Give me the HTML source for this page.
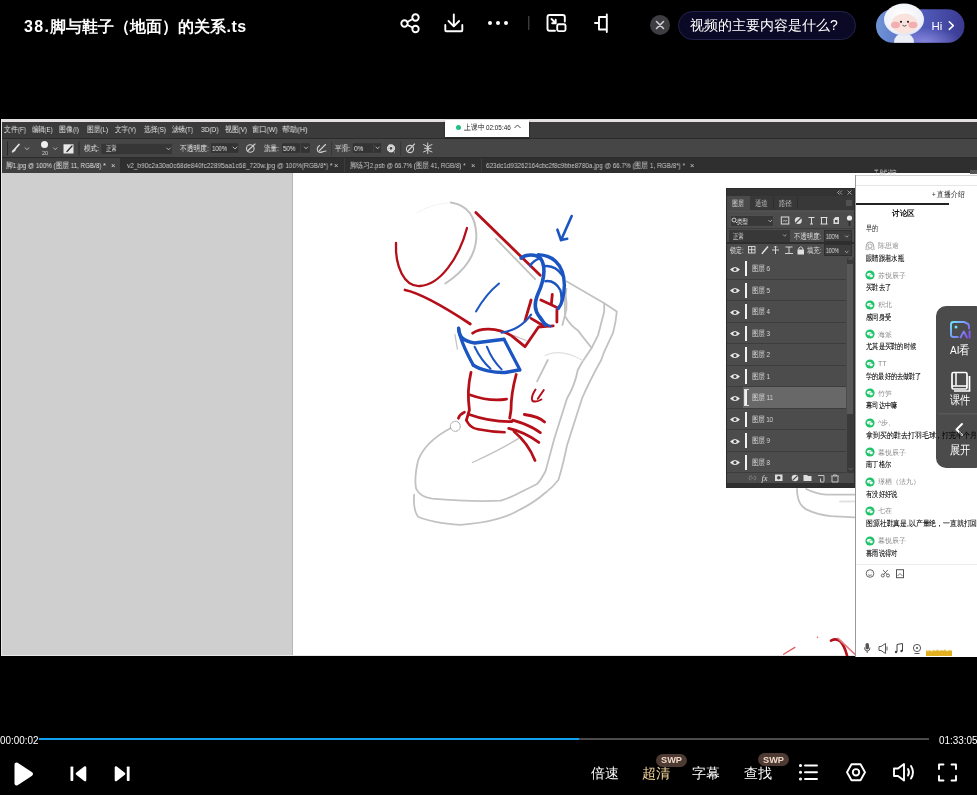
<!DOCTYPE html>
<html><head><meta charset="utf-8">
<style>
*{margin:0;padding:0;box-sizing:border-box}
html,body{width:977px;height:795px;overflow:hidden;background:#000}
body{position:relative;font-family:"Liberation Sans",sans-serif;color:#fff}
.a{position:absolute}
.t{white-space:nowrap;line-height:1}
.ps span{white-space:nowrap;line-height:1}
.a{will-change:transform}
</style></head><body>
<!-- title -->
<div class="a t" style="left:24px;top:18.5px;font-size:16px;font-weight:bold"><span style="letter-spacing:1.4px">38.</span>脚与鞋子（地面）的关系<span style="letter-spacing:0.5px">.ts</span></div>
<svg class="a" style="left:0;top:0" width="977" height="50" viewBox="0 0 977 50" fill="none" stroke="#fff" stroke-width="1.9" stroke-linecap="round" stroke-linejoin="round">
 <!-- share -->
 <circle cx="404.5" cy="23.5" r="3.2"></circle><circle cx="415.5" cy="17.5" r="3.2"></circle><circle cx="415.5" cy="29" r="3.2"></circle>
 <path d="M407.3 22 L412.7 19 M407.3 25 L412.7 27.5"></path>
 <!-- download -->
 <path d="M453.8 14.5 V26 M448.5 21 L453.8 26.3 L459.1 21 M445.3 25 V30.3 Q445.3 31.3 446.3 31.3 H461.3 Q462.3 31.3 462.3 30.3 V25"></path>
 <!-- separator -->
 <path d="M528.8 16.5 V29.5" stroke="#555" stroke-width="1"></path>
 <!-- pip -->
 <path d="M555 30.8 H549.5 Q547.5 30.8 547.5 28.8 V17 Q547.5 15 549.5 15 H562.8 Q564.8 15 564.8 17 V21.5"></path>
 <rect x="557.2" y="24.3" width="8.3" height="6.8" rx="1.5"></rect>
 <path d="M551.5 19 L555.5 23 M552.2 23.3 H555.7 V19.8"></path>
 <!-- last icon -->
 <path d="M595 23 H599 M599 17 H606.8 V29.5 H599 Z M606.8 14.5 V32"></path>
</svg>
<div class="a" style="left:488px;top:21px;width:4px;height:4px;border-radius:2px;background:#fff"></div>
<div class="a" style="left:496px;top:21px;width:4px;height:4px;border-radius:2px;background:#fff"></div>
<div class="a" style="left:504px;top:21px;width:4px;height:4px;border-radius:2px;background:#fff"></div>
<!-- close circle -->
<div class="a" style="left:650px;top:15px;width:20px;height:20px;border-radius:10px;background:#3d3d42"></div>
<svg class="a" style="left:650px;top:15px" width="20" height="20" stroke="#cfcfd4" stroke-width="1.6" stroke-linecap="round"><path d="M6.5 6.5 L13.5 13.5 M13.5 6.5 L6.5 13.5"></path></svg>
<!-- question pill -->
<div class="a" style="left:678px;top:10.5px;width:178px;height:29px;border-radius:15px;background:#0b0a26;border:1px solid #24224a"></div>
<div class="a t" style="left:690px;top:18px;font-size:14px;color:#fff">视频的主要内容是什么?</div>
<!-- avatar pill -->
<svg class="a" style="left:870px;top:0" width="107" height="50" viewBox="0 0 107 50">
 <defs>
  <linearGradient id="pg" x1="0" x2="1" y1="0" y2="0"><stop offset="0" stop-color="#6f96d6"></stop><stop offset="0.45" stop-color="#5460c0"></stop><stop offset="1" stop-color="#3b3a92"></stop></linearGradient>
  <radialGradient id="pl" cx="0.55" cy="0.95" r="0.4"><stop offset="0" stop-color="#8f8ce0" stop-opacity="0.8"></stop><stop offset="1" stop-color="#8f8ce0" stop-opacity="0"></stop></radialGradient>
  <radialGradient id="hl" cx="0.45" cy="0.35" r="0.7"><stop offset="0" stop-color="#ffffff"></stop><stop offset="0.8" stop-color="#eef0f8"></stop><stop offset="1" stop-color="#d8dcec"></stop></radialGradient>
 </defs>
 <rect x="6" y="9.3" width="88.5" height="33.4" rx="16.7" fill="url(#pg)"></rect>
 <rect x="6" y="9.3" width="88.5" height="33.4" rx="16.7" fill="url(#pl)"></rect>
 <path d="M24 42.7 Q24 34 34 33 Q44 34 44 42.7 Z" fill="#eceef6"></path>
 <ellipse cx="34" cy="19.5" rx="20" ry="16" fill="url(#hl)"></ellipse>
 <ellipse cx="34.5" cy="23.5" rx="13" ry="10" fill="#f9e3dc"></ellipse>
 <ellipse cx="25.5" cy="25" rx="4.5" ry="3.2" fill="#f4a0a4" opacity="0.8"></ellipse>
 <ellipse cx="43" cy="25" rx="4.5" ry="3.2" fill="#f4a0a4" opacity="0.8"></ellipse>
 <circle cx="31" cy="21.8" r="1.1" fill="#222"></circle><circle cx="38" cy="21.8" r="1.1" fill="#222"></circle>
 <path d="M32.5 25.3 Q34.5 27 36.5 25.3" stroke="#333" stroke-width="0.8" fill="none"></path>
 <text x="61.5" y="29.6" font-family="Liberation Sans" font-size="11.5" fill="#fff">Hi</text>
 <path d="M79.3 21.8 L83.3 25.6 L79.3 29.4" stroke="#fff" stroke-width="1.5" fill="none" stroke-linecap="round" stroke-linejoin="round"></path>
</svg>


<!-- video frame -->
<div class="a" style="left:1px;top:119px;width:976px;height:537px;background:#cfcfcf"></div>
<div class="a" style="left:1px;top:119px;width:976px;height:2.5px;background:#e4dfdf"></div>
<div class="a" style="left:1px;top:121.5px;width:976px;height:16px;background:#3b3b3b"></div>
<div class="a" style="left:1px;top:137.5px;width:976px;height:1.5px;background:#2b2b2b"></div>
<div class="a" style="left:1px;top:139px;width:976px;height:18px;background:#464646"></div>
<div class="a" style="left:1px;top:157px;width:976px;height:1px;background:#2b2b2b"></div>
<div class="a" style="left:1px;top:158px;width:976px;height:15px;background:#2f2f2f"></div>
<div class="a" style="left:1px;top:158px;width:119px;height:15px;background:#404040"></div>
<div class="a" style="left:293px;top:173px;width:684px;height:483px;background:#fff"></div>
<div class="a" style="left:292px;top:173px;width:1px;height:483px;background:#b5b5b5"></div>
<div class="a" style="left:1px;top:119px;width:1px;height:537px;background:#e8e8e8"></div>
<div class="a" style="left:1px;top:655px;width:976px;height:1px;background:#e8e8e8"></div>

<!-- drawing -->
<svg class="a" style="left:293px;top:173px" width="562" height="483" viewBox="293 173 562 483" fill="none" stroke-linecap="round" stroke-linejoin="round">
 <g stroke="#c2c2c2" stroke-width="1.8">
  <path d="M417 213 Q430 204 450.9 202.6" stroke="#f2f2f2" stroke-width="1"></path>
  <path d="M450.9 202.6 C466 205 476 215 476.4 236.5 C476 255 466 270 445.3 283.5" stroke-width="2"></path>
  <path d="M496 238.8 L535.2 279.2"></path>
  <path d="M566.4 281.3 L604.2 303.3 L616.8 311.5 Q616 322 613 332.9 L604.2 351.8 L601.2 360 Q590 380 582 398.5 L567 445.5 Q563 465 558.5 479.7 Q552 488 545.6 492.5 Q535 502 520 509.6 Q500 522 460.4 524.9 Q432 523 418.1 516.8 Q413 510 414.1 494.7"></path>
  <path d="M604.2 303.3 L604.2 311.5 L598 335.4 L591.6 348 L581.6 363 L577.8 370 Q575 385 567 398.5 L554.2 439 L545.6 471 Q541 480 537.1 484 L520 492.5 Q512 497 500.6 500.7 Q470 502 432 498.7 Q420 497 416.1 488.7 Q414 478 418.1 460.5 Q425 442 450.3 428.3"></path>
  <path d="M566.5 288.9 Q564 300 565.2 316.5 Q570 325 577.8 330.4 L591.6 348"></path>
  <path d="M545 355.5 Q561.4 348 582.8 360.6" stroke="#e0e0e0" stroke-width="1.2"></path>
  <path d="M565.4 293.3 Q567 302 566.4 309.4 L562.4 325"></path>
  <path d="M547.8 360 L537.1 381.4"></path>
  
  
  
  <path d="M472.4 462.5 Q500 450 518.7 438.4" stroke-width="1.3"></path>
  <path d="M513.9 335.6 L526.2 340.5" stroke-width="1.3"></path>
  <path d="M454.9 334.4 L457.4 349.1" stroke-width="1.2"></path>
  <path d="M797 489 C797 498 800 506 806.2 509.4 Q818 515 831 516.2 L854.8 517.3"></path>
  <path d="M806.2 489 Q816 494 826.6 494.7 L854.8 494.7"></path>
  <path d="M840 501.5 L854.8 501.5" stroke="#e2e2e2"></path>
  <circle cx="455.3" cy="426.3" r="5" stroke="#9a9a9a" stroke-width="0.9" stroke-dasharray="1.5 1"></circle>
 </g>
 <g stroke="#b50f19" stroke-width="2.8">
  <path d="M396 243 C395 266 404 287 420 286 C440 285 459 258 467 228" stroke-width="2.3"></path>
  <path d="M475.8 212.4 L540.2 275.2"></path>
  <path d="M405 290 C420 293 446 308 470.3 324"></path>
  <path d="M472.7 333.2 C480 328 496 327 511.4 335.6 L525 346.7 L538.5 327 L553.2 325.8"></path>
  <path d="M556.9 309.8 L556.9 322"></path>
  <path d="M531.1 300 L525 320.9"></path>
  <path d="M540.9 300 L556.9 307.4"></path>
  <path d="M552.3 294.3 L551.3 304.4"></path>
  <path d="M531 318.4 L543.4 325.8"></path>
  <path d="M471 372.3 C468 385 468 400 469.4 410 L466.4 420.2"></path>
  <path d="M516.2 374.5 C512 390 511 400 511 410 L509.7 418.2"></path>
  <path d="M470.4 395 Q490 402 506.6 399.1"></path>
  <path d="M468.4 414.2 Q490 422 512 421.5"></path>
  <path d="M466.4 420.2 Q470 428 478 429.3 Q492 432 504.6 432.3" stroke-width="2.6"></path>
  <path d="M458.4 418.2 Q460 414 464.4 412.2"></path>
  <path d="M535.5 389.5 Q530.5 397 532.5 401 Q536.5 402.5 541.4 399.5 M543.8 390 L537.8 398.8" stroke-width="2"></path>
  <path d="M524.3 414.5 Q539.2 416.6 544.6 422"></path>
  <path d="M512.7 420.2 Q530 425 540.3 432.6"></path>
  <path d="M508.7 428.3 Q525 432 538.8 442.4"></path>
  <path d="M514 431.5 Q528 443 535 460.4"></path>
  <path d="M783.6 654.2 L794.9 647.4" stroke="#e05a60" stroke-width="1.3"></path>
  <circle cx="817.5" cy="637.2" r="0.8" fill="#e05a60" stroke="none"></circle>
  <path d="M831 640.6 C838 637 843 641 847 655.3" stroke-width="2.6"></path>
  <path d="M838 638.4 L854.8 654.2" stroke="#e07a80" stroke-width="1.6"></path>
 </g>
 <g stroke="#1b55c2" stroke-width="3">
  <path d="M571.7 216 L561 240.3 M557.4 229.7 L561 240 L567.2 238.8" stroke-width="2.6"></path>
  <path d="M538.2 254.6 C550 255 564 262 564.4 285.2 C564 296 562 304 558.4 308.4" stroke-width="3.4"></path>
  <path d="M521.1 258.1 C526 254 536 254 540.2 258.1 C545 264 546 276 538.2 293.3 C533 305 535 312 540.2 317.4 L545.3 325" stroke-width="3.6"></path>
  <path d="M530.2 266.1 Q533 260 541.2 258.1" stroke-width="2.4"></path>
  <path d="M544.3 266.1 Q555 265 562.4 275.2" stroke-width="2.4"></path>
  <path d="M545.3 281.2 Q555 280 560.4 290.3 Q562 296 561.4 301.3" stroke-width="2.4"></path>
  <path d="M536 300 C534 312 540 322 550.7 326.4" stroke-width="2.4"></path>
  <path d="M499 283.5 Q486 294 476 311.5" stroke-width="2"></path>
  <path d="M531.1 314.7 C525 323 515 331 501.6 332.6" stroke-width="2.2"></path>
  <path d="M458.6 328.3 C459 336 462 341 474.6 343 L504 339.3" stroke-width="3.4"></path>
  <path d="M458.6 328.3 C460 340 466 352 473.3 365.1" stroke-width="3.2"></path>
  <path d="M473.3 365.1 C480 370 495 373 505.3 372.5 L518.8 370" stroke-width="3.4"></path>
  <path d="M504 339.3 L520 370" stroke-width="3.2"></path>
  <path d="M474.6 346.7 Q481 360 490.5 368.8" stroke-width="2"></path>
  <path d="M486.9 346.7 Q492 360 501.6 369.4" stroke-width="2"></path>
 </g>
</svg>

<!-- PS menu -->
<div class="a t ps" style="top:126px;font-size:7.5px;color:#e6e6e6">
<span class="a" style="left: 3.5px; display: inline-block; transform: scaleX(0.8601); transform-origin: left center;">文件(F)</span><span class="a" style="left: 32px; display: inline-block; transform: scaleX(0.7885); transform-origin: left center;">编辑(E)</span><span class="a" style="left: 59px; display: inline-block; transform: scaleX(0.866); transform-origin: left center;">图像(I)</span><span class="a" style="left: 87px; display: inline-block; transform: scaleX(0.8343); transform-origin: left center;">图层(L)</span><span class="a" style="left: 115px; display: inline-block; transform: scaleX(0.8077); transform-origin: left center;">文字(Y)</span><span class="a" style="left: 143.5px; display: inline-block; transform: scaleX(0.8462); transform-origin: left center;">选择(S)</span><span class="a" style="left: 172px; display: inline-block; transform: scaleX(0.821); transform-origin: left center;">滤镜(T)</span><span class="a" style="left: 201px; display: inline-block; transform: scaleX(0.875); transform-origin: left center;">3D(D)</span><span class="a" style="left: 224.5px; display: inline-block; transform: scaleX(0.8462); transform-origin: left center;">视图(V)</span><span class="a" style="left: 251.5px; display: inline-block; transform: scaleX(0.9082); transform-origin: left center;">窗口(W)</span><span class="a" style="left: 282px; display: inline-block; transform: scaleX(0.9651); transform-origin: left center;">帮助(H)</span>
</div>
<!-- options bar -->
<svg class="a" style="left:0;top:139px" width="440" height="18" viewBox="0 0 440 18" fill="none" stroke="#cfcfcf" stroke-linecap="round">
 <path d="M7.5 3 V16" stroke="#2a2a2a" stroke-width="1"></path>
 <path d="M19 5.5 L14.5 10.5" stroke="#e6e6e6" stroke-width="1.7"></path>
 <path d="M14.8 10.3 Q12.2 10.8 12 13.2 Q14 13.3 15.3 11.3 Z" fill="#e6e6e6" stroke="#e6e6e6" stroke-width="0.8"></path>
 <path d="M25 8.8 L27 10.6 L29 8.8" stroke-width="0.8"></path>
 <path d="M53.5 8.8 L55.3 10.6 L57 8.8" stroke-width="0.8"></path>
 <rect x="63.5" y="5.3" width="10" height="9.2" fill="#e8e8e8" stroke="none"></rect>
 <path d="M72 7 L67 12.5" stroke="#333" stroke-width="1.4"></path>
 <path d="M79 3 V16" stroke="#2a2a2a" stroke-width="1"></path>
 <rect x="101" y="4.4" width="71.2" height="11" fill="#363636" stroke="#4a4a4a" stroke-width="0.6"></rect>
 <path d="M166.7 9 L168.5 10.8 L170.3 9" stroke-width="0.8"></path>
 <rect x="210.7" y="3.9" width="28.2" height="10.3" fill="#333" stroke="#4d4d4d" stroke-width="0.6"></rect>
 <path d="M233 8 L235 10 L237 8" stroke-width="0.8"></path>
 <circle cx="250.3" cy="9.5" r="3.8" stroke-width="1.1"></circle><path d="M247.5 12 L255 5" stroke-width="1.1"></path>
 <rect x="281.5" y="3.9" width="28.7" height="10.3" fill="#333" stroke="#4d4d4d" stroke-width="0.6"></rect>
 <path d="M300.5 3.9 V14.2" stroke="#4d4d4d" stroke-width="0.6"></path>
 <path d="M304.4 8 L306 9.8 L307.7 8" stroke-width="0.8"></path>
 <path d="M319.5 6.5 Q316 9 318 12.5 Q320 14 323 13 M319.5 11.5 L325.5 5.5 M321 13 L326 12" stroke-width="1.1"></path>
 <path d="M331.5 3 V16" stroke="#383838" stroke-width="1"></path>
 <rect x="352.2" y="3.9" width="29.2" height="10.3" fill="#333" stroke="#4d4d4d" stroke-width="0.6"></rect>
 <path d="M373.7 3.9 V14.2" stroke="#4d4d4d" stroke-width="0.6"></path>
 <path d="M376 8 L377.6 9.8 L379.3 8" stroke-width="0.8"></path>
 <circle cx="391" cy="9.3" r="3.3" stroke="#e0e0e0" stroke-width="1.6" stroke-dasharray="1.3 1.3"></circle><circle cx="391" cy="9.3" r="2" stroke="#e0e0e0" stroke-width="1.3"></circle><circle cx="394.5" cy="13" r="0.5" fill="#ddd" stroke="none"></circle>
 <path d="M400.6 3 V16" stroke="#383838" stroke-width="1"></path>
 <circle cx="410" cy="10" r="3.6" stroke-width="1.1"></circle><path d="M407.5 12.5 L414.5 5" stroke-width="1.1"></path>
 <path d="M423.5 5.5 Q427.7 6.5 427.7 9.3 Q427.7 12 423.5 13 M432 5.5 Q427.7 6.5 427.7 9.3 Q427.7 12 432 13 M427.7 4 V14.5 M424.5 9.3 H431" stroke-width="1"></path>
</svg>
<div class="a" style="left:40.5px;top:140.6px;width:7.4px;height:7.4px;border-radius:4px;background:#f0f0f0"></div>
<div class="a t ps" style="left:41.5px;top:151px;font-size:5.5px;color:#ccc">20</div>
<div class="a t ps" style="top:144.5px;font-size:7.5px;color:#e6e6e6">
<span class="a" style="left: 83.8px; display: inline-block; transform: scaleX(0.8124); transform-origin: left center;">模式:</span><span class="a" style="left: 106px; display: inline-block; transform: scaleX(0.6875); transform-origin: left center;">正常</span><span class="a" style="left: 179.8px; display: inline-block; transform: scaleX(0.8418); transform-origin: left center;">不透明度:</span><span class="a" style="left: 212.3px; font-size: 7px; top: 0.3px; display: inline-block; transform: scaleX(0.8377); transform-origin: left center;">100%</span><span class="a" style="left: 264.3px; display: inline-block; transform: scaleX(0.8124); transform-origin: left center;">流量:</span><span class="a" style="left: 283px; font-size: 7px; top: 0.3px; display: inline-block; transform: scaleX(0.8847); transform-origin: left center;">50%</span><span class="a" style="left: 335px; display: inline-block; transform: scaleX(0.829); transform-origin: left center;">平滑:</span><span class="a" style="left: 353.8px; font-size: 7px; top: 0.3px; display: inline-block; transform: scaleX(0.9086); transform-origin: left center;">0%</span>
</div>
<!-- tabs -->
<div class="a t ps" style="top:161.5px;font-size:7.5px;color:#c8c8c8">
<span class="a" style="left: 6px; color: rgb(224, 224, 224); display: inline-block; transform: scaleX(0.8301); transform-origin: left center;">脚1.jpg @ 100% (图层 11, RGB/8) *</span><span class="a" style="left:110.5px;color:#ddd">×</span>
<span class="a" style="left: 126.5px; display: inline-block; transform: scaleX(0.8642); transform-origin: left center;">v2_b90c2a30a0c68de840fc22895aa1c68_720w.jpg @ 100%(RGB/8*) *</span><span class="a" style="left:334.4px">×</span>
<span class="a" style="left: 350.4px; display: inline-block; transform: scaleX(0.8223); transform-origin: left center;">脚练习2.psb @ 66.7% (图层 41, RGB/8) *</span><span class="a" style="left:471px">×</span>
<span class="a" style="left: 485.8px; display: inline-block; transform: scaleX(0.8482); transform-origin: left center;">623dc1d93262164cbc2f8c9bbe8780a.jpg @ 66.7% (图层 1, RGB/8*) *</span><span class="a" style="left:689.7px">×</span>
</div>
<div class="a" style="left:344px;top:158px;width:1px;height:14px;background:#3c3c3c"></div>
<div class="a" style="left:481px;top:158px;width:1px;height:14px;background:#3c3c3c"></div>

<!-- popup -->
<div class="a" style="left:445px;top:119.5px;width:84px;height:16.5px;background:#fff;box-shadow:0 1px 2px rgba(0,0,0,0.4)"></div>
<div class="a" style="left:456px;top:124.5px;width:4.5px;height:4.5px;border-radius:3px;background:#1fc283"></div>
<div class="a t" style="left:463.8px;top:124px;font-size:7.5px;color:#222"><span style="display: inline-block; transform: scaleX(0.8448); transform-origin: left center;">上课中 02:05:46</span></div>
<svg class="a" style="left:513px;top:122px" width="9" height="9" fill="none" stroke="#333" stroke-width="0.9"><path d="M1.5 6 L4.5 3 L7.5 6"></path></svg>

<!-- layers panel -->
<div class="a" style="left:726px;top:188px;width:129px;height:300px;background:#4c4c4c;border:1px solid #2c2c2c"></div>
<div class="a" style="left:727px;top:189px;width:127px;height:7px;background:#333"></div>
<div class="a" style="left:727px;top:196px;width:127px;height:14px;background:#383838"></div>
<div class="a" style="left:727px;top:196px;width:23px;height:14px;background:#4a4a4a"></div>
<div class="a" style="left:773px;top:197px;width:1px;height:12px;background:#2e2e2e"></div>
<div class="a" style="left:796.5px;top:197px;width:1px;height:12px;background:#2e2e2e"></div>
<div class="a t ps" style="top:199.5px;font-size:7.5px;color:#d8d8d8">
<span class="a" style="left: 731.5px; display: inline-block; transform: scaleX(0.75); transform-origin: left center;">图层</span><span class="a" style="left: 755px; color: rgb(187, 187, 187); display: inline-block; transform: scaleX(0.7813); transform-origin: left center;">通道</span><span class="a" style="left: 779px; color: rgb(187, 187, 187); display: inline-block; transform: scaleX(0.7813); transform-origin: left center;">路径</span>
</div>
<svg class="a" style="left:836px;top:188px" width="20" height="25" fill="none" stroke="#bbb" stroke-width="0.8">
 <path d="M3.5 2.5 L1.5 4.5 L3.5 6.5 M6 2.5 L4 4.5 L6 6.5"></path>
 <path d="M11.5 2.5 L15.5 6.5 M15.5 2.5 L11.5 6.5"></path>
 <path d="M10 13 H16 M10 15 H16 M10 17 H16" stroke="#777"></path>
</svg>
<div class="a" style="left:727px;top:211px;width:127px;height:1px;background:#525252"></div>
<div class="a" style="left:729.5px;top:215px;width:43.5px;height:12px;background:#383838;border:1px solid #4f4f4f"></div>
<svg class="a" style="left:729px;top:214px" width="126" height="14" fill="none" stroke="#dcdcdc" stroke-width="0.9">
 <circle cx="5" cy="6" r="2"></circle><path d="M6.5 7.5 L8.2 9.2"></path>
 <path d="M39.5 6 L41.2 7.8 L43 6" stroke-width="0.7"></path>
 <rect x="52.3" y="3" width="7.5" height="7" stroke-width="1"></rect><path d="M54.1 7.5 L55.3 6 L56.8 7.5 L58.1 6" stroke-width="0.7"></path>
 <circle cx="69.3" cy="6.5" r="3.5" fill="#dcdcdc" stroke="none"></circle><path d="M66.8 9 L71.8 4" stroke="#464646" stroke-width="1.2"></path>
 <path d="M79.5 3.5 H85.5 M82.5 3.5 V10 M81 10 H84" stroke-width="1"></path>
 <path d="M92.5 3.5 V10 M97.5 3.5 V10 M91.5 3.5 H98.5 M91.5 10 H98.5" stroke-width="1"></path>
 <path d="M104.5 5 L106.5 3 H110 V10 H104.5 Z" fill="#dcdcdc" stroke="none"></path><rect x="106" y="6" width="2.5" height="2.5" fill="#464646" stroke="none"></rect>
 <circle cx="120.5" cy="4" r="2.6" fill="#eee" stroke="none"></circle><path d="M120.5 7 V12" stroke="#2a2a2a" stroke-width="1.6"></path>
</svg>
<div class="a t ps" style="top:218px;font-size:7px;color:#e0e0e0"><span class="a" style="left: 736.5px; display: inline-block; transform: scaleX(0.7857); transform-origin: left center;">类型</span></div>
<div class="a" style="left:727px;top:228px;width:127px;height:1px;background:#3e3e3e"></div>
<div class="a" style="left:729px;top:230px;width:61px;height:11.5px;background:#383838"></div>
<div class="a" style="left:823.5px;top:229.5px;width:28px;height:12px;border:1px solid #2f2f2f;background:#3c3c3c;"></div>
<div class="a" style="left:823.5px;top:244px;width:28px;height:12px;border:1px solid #2f2f2f;background:#3c3c3c"></div>
<div class="a t ps" style="top:232.5px;font-size:7.5px;color:#e0e0e0"><span class="a" style="left: 732.5px; display: inline-block; transform: scaleX(0.6875); transform-origin: left center;">正常</span><span class="a" style="left: 793.8px; display: inline-block; transform: scaleX(0.7978); transform-origin: left center;">不透明度:</span><span class="a" style="left: 826px; font-size: 6.5px; top: 0.5px; display: inline-block; transform: scaleX(0.782); transform-origin: left center;">100%</span></div>
<svg class="a" style="left:727px;top:228px" width="127" height="30" fill="none" stroke="#ccc" stroke-width="0.7">
 <path d="M56 6.5 L57.7 8.2 L59.4 6.5"></path><path d="M118 7.5 L119.7 9.2 L121.4 7.5"></path><path d="M118 23 L119.7 24.7 L121.4 23"></path>
</svg>
<div class="a" style="left:727px;top:242px;width:127px;height:1.5px;background:#2e2e2e"></div>
<div class="a t ps" style="top:247px;font-size:7.5px;color:#e0e0e0"><span class="a" style="left: 730px; display: inline-block; transform: scaleX(0.7461); transform-origin: left center;">锁定:</span><span class="a" style="left: 806.7px; display: inline-block; transform: scaleX(0.7903); transform-origin: left center;">填充:</span><span class="a" style="left: 826px; font-size: 6.5px; top: 0.5px; display: inline-block; transform: scaleX(0.782); transform-origin: left center;">100%</span></div>
<svg class="a" style="left:727px;top:243px" width="127" height="15" fill="none" stroke="#e0e0e0" stroke-width="1">
 <rect x="21.5" y="3.5" width="6.5" height="6.5" stroke-width="0.9"></rect><path d="M21.5 6.7 H28 M24.7 3.5 V10" stroke-width="0.9"></path>
 <path d="M41 3.5 L35.5 10 M35.5 10 L35 11" stroke-width="1.5"></path>
 <path d="M48.5 3 V11 M45 7 H52 M47 4.5 L48.5 3 L50 4.5" stroke-width="0.9"></path>
 <path d="M58.5 4 H65.5 M62 4 V10 M58 10.5 H66" stroke-width="0.9"></path>
 <rect x="70.5" y="6.5" width="6.5" height="5" fill="#e0e0e0" stroke="none"></rect><path d="M71.8 6.5 V5 Q73.75 2.5 75.7 5 V6.5" stroke-width="0.9"></path>
</svg>
<div class="a" style="left:727px;top:278.5px;width:119px;height:1px;background:#3d3d3d"></div>
<svg class="a" style="left:729px;top:264.5px" width="12" height="9" viewBox="0 0 12 9"><path d="M1 4.5 Q6 -0.5 11 4.5 Q6 9.5 1 4.5 Z" fill="#e8e8e8"></path><circle cx="6" cy="4.5" r="1.6" fill="#444"></circle></svg>
<div class="a" style="left:745px;top:261.0px;width:2px;height:15px;background:#f2f2f2"></div>
<div class="a t ps" style="top:265.0px;font-size:7.5px;color:#dedede"><span class="a" style="left: 752px; display: inline-block; transform: scaleX(0.8084); transform-origin: left center;">图层 6</span></div>
<div class="a" style="left:727px;top:300.0px;width:119px;height:1px;background:#3d3d3d"></div>
<svg class="a" style="left:729px;top:286.0px" width="12" height="9" viewBox="0 0 12 9"><path d="M1 4.5 Q6 -0.5 11 4.5 Q6 9.5 1 4.5 Z" fill="#e8e8e8"></path><circle cx="6" cy="4.5" r="1.6" fill="#444"></circle></svg>
<div class="a" style="left:745px;top:282.5px;width:2px;height:15px;background:#f2f2f2"></div>
<div class="a t ps" style="top:286.5px;font-size:7.5px;color:#dedede"><span class="a" style="left: 752px; display: inline-block; transform: scaleX(0.8084); transform-origin: left center;">图层 5</span></div>
<div class="a" style="left:727px;top:321.5px;width:119px;height:1px;background:#3d3d3d"></div>
<svg class="a" style="left:729px;top:307.5px" width="12" height="9" viewBox="0 0 12 9"><path d="M1 4.5 Q6 -0.5 11 4.5 Q6 9.5 1 4.5 Z" fill="#e8e8e8"></path><circle cx="6" cy="4.5" r="1.6" fill="#444"></circle></svg>
<div class="a" style="left:745px;top:304.0px;width:2px;height:15px;background:#f2f2f2"></div>
<div class="a t ps" style="top:308.0px;font-size:7.5px;color:#dedede"><span class="a" style="left: 752px; display: inline-block; transform: scaleX(0.8084); transform-origin: left center;">图层 4</span></div>
<div class="a" style="left:727px;top:343.0px;width:119px;height:1px;background:#3d3d3d"></div>
<svg class="a" style="left:729px;top:329.0px" width="12" height="9" viewBox="0 0 12 9"><path d="M1 4.5 Q6 -0.5 11 4.5 Q6 9.5 1 4.5 Z" fill="#e8e8e8"></path><circle cx="6" cy="4.5" r="1.6" fill="#444"></circle></svg>
<div class="a" style="left:745px;top:325.5px;width:2px;height:15px;background:#f2f2f2"></div>
<div class="a t ps" style="top:329.5px;font-size:7.5px;color:#dedede"><span class="a" style="left: 752px; display: inline-block; transform: scaleX(0.8084); transform-origin: left center;">图层 3</span></div>
<div class="a" style="left:727px;top:364.5px;width:119px;height:1px;background:#3d3d3d"></div>
<svg class="a" style="left:729px;top:350.5px" width="12" height="9" viewBox="0 0 12 9"><path d="M1 4.5 Q6 -0.5 11 4.5 Q6 9.5 1 4.5 Z" fill="#e8e8e8"></path><circle cx="6" cy="4.5" r="1.6" fill="#444"></circle></svg>
<div class="a" style="left:745px;top:347.0px;width:2px;height:15px;background:#f2f2f2"></div>
<div class="a t ps" style="top:351.0px;font-size:7.5px;color:#dedede"><span class="a" style="left: 752px; display: inline-block; transform: scaleX(0.8084); transform-origin: left center;">图层 2</span></div>
<div class="a" style="left:727px;top:386.0px;width:119px;height:1px;background:#3d3d3d"></div>
<svg class="a" style="left:729px;top:372.0px" width="12" height="9" viewBox="0 0 12 9"><path d="M1 4.5 Q6 -0.5 11 4.5 Q6 9.5 1 4.5 Z" fill="#e8e8e8"></path><circle cx="6" cy="4.5" r="1.6" fill="#444"></circle></svg>
<div class="a" style="left:745px;top:368.5px;width:2px;height:15px;background:#f2f2f2"></div>
<div class="a t ps" style="top:372.5px;font-size:7.5px;color:#dedede"><span class="a" style="left: 752px; display: inline-block; transform: scaleX(0.8084); transform-origin: left center;">图层 1</span></div>
<div class="a" style="left:743px;top:387.0px;width:103px;height:21.5px;background:#686868"></div>
<div class="a" style="left:727px;top:407.5px;width:119px;height:1px;background:#3d3d3d"></div>
<svg class="a" style="left:729px;top:393.5px" width="12" height="9" viewBox="0 0 12 9"><path d="M1 4.5 Q6 -0.5 11 4.5 Q6 9.5 1 4.5 Z" fill="#e8e8e8"></path><circle cx="6" cy="4.5" r="1.6" fill="#444"></circle></svg>
<div class="a" style="left:745px;top:390.0px;width:2px;height:15px;background:#f2f2f2"></div>
<div class="a" style="left:743.5px;top:389.0px;width:5px;height:17px;border:1px solid #ddd;border-right:none"></div>
<div class="a t ps" style="top:394.0px;font-size:7.5px;color:#dedede"><span class="a" style="left: 752px; display: inline-block; transform: scaleX(0.8116); transform-origin: left center;">图层 11</span></div>
<div class="a" style="left:727px;top:429.0px;width:119px;height:1px;background:#3d3d3d"></div>
<svg class="a" style="left:729px;top:415.0px" width="12" height="9" viewBox="0 0 12 9"><path d="M1 4.5 Q6 -0.5 11 4.5 Q6 9.5 1 4.5 Z" fill="#e8e8e8"></path><circle cx="6" cy="4.5" r="1.6" fill="#444"></circle></svg>
<div class="a" style="left:745px;top:411.5px;width:2px;height:15px;background:#f2f2f2"></div>
<div class="a t ps" style="top:415.5px;font-size:7.5px;color:#dedede"><span class="a" style="left: 752px; display: inline-block; transform: scaleX(0.7943); transform-origin: left center;">图层 10</span></div>
<div class="a" style="left:727px;top:450.5px;width:119px;height:1px;background:#3d3d3d"></div>
<svg class="a" style="left:729px;top:436.5px" width="12" height="9" viewBox="0 0 12 9"><path d="M1 4.5 Q6 -0.5 11 4.5 Q6 9.5 1 4.5 Z" fill="#e8e8e8"></path><circle cx="6" cy="4.5" r="1.6" fill="#444"></circle></svg>
<div class="a" style="left:745px;top:433.0px;width:2px;height:15px;background:#f2f2f2"></div>
<div class="a t ps" style="top:437.0px;font-size:7.5px;color:#dedede"><span class="a" style="left: 752px; display: inline-block; transform: scaleX(0.8084); transform-origin: left center;">图层 9</span></div>
<div class="a" style="left:727px;top:472.0px;width:119px;height:1px;background:#3d3d3d"></div>
<svg class="a" style="left:729px;top:458.0px" width="12" height="9" viewBox="0 0 12 9"><path d="M1 4.5 Q6 -0.5 11 4.5 Q6 9.5 1 4.5 Z" fill="#e8e8e8"></path><circle cx="6" cy="4.5" r="1.6" fill="#444"></circle></svg>
<div class="a" style="left:745px;top:454.5px;width:2px;height:15px;background:#f2f2f2"></div>
<div class="a t ps" style="top:458.5px;font-size:7.5px;color:#dedede"><span class="a" style="left: 752px; display: inline-block; transform: scaleX(0.8084); transform-origin: left center;">图层 8</span></div>

<div class="a" style="left:846.5px;top:258px;width:7px;height:215px;background:#3a3a3a"></div>
<div class="a" style="left:847px;top:264px;width:6px;height:150px;background:#585858"></div>
<svg class="a" style="left:846px;top:254px" width="9" height="222" fill="none" stroke="#777" stroke-width="0.7"><path d="M2.5 6 L4.5 4 L6.5 6"></path><path d="M2.5 214 L4.5 216 L6.5 214"></path></svg>
<div class="a" style="left:727px;top:483px;width:127px;height:4px;background:#2f2f2f"></div>
<svg class="a" style="left:745px;top:472px" width="100" height="12" fill="none" stroke="#d0d0d0" stroke-width="1">
 <path d="M4 6 Q4 4 6 4 H7 M9 4 Q11 4 11 6 Q11 8 9 8 M6 8 Q4 8 4 6 M6 6 H9" stroke="#888" stroke-width="0.8"></path>
 <text x="16.5" y="9" font-family="Liberation Serif" font-style="italic" font-size="8.5" fill="#ddd" stroke="none">fx</text>
 <rect x="30" y="2.5" width="7.5" height="6.5" fill="#ddd" stroke="none"></rect><circle cx="33.7" cy="5.7" r="1.8" fill="#464646" stroke="none"></circle>
 <circle cx="50" cy="6" r="3.3" fill="#ddd" stroke="none"></circle><path d="M47.8 8.2 L52.3 3.8" stroke="#464646" stroke-width="1.1"></path>
 <path d="M58.5 3 H62 L63 4 H66.5 V9 H58.5 Z" fill="#ddd" stroke="none"></path>
 <path d="M73 3.5 H79 V9.5 M75.5 6.5 V10 H79" stroke-width="0.9"></path>
 <path d="M86 4 H94 M88.5 4 V3 H91.5 V4 M87 4.5 V10 H93 V4.5" stroke-width="0.9"></path>
</svg>

<!-- chat panel -->
<div class="a t" style="left:874px;top:169.5px;font-size:7.5px;color:#d8d8d8"><span style="display: inline-block; transform: scaleX(0.575); transform-origin: left center;">工具栏设定</span></div>
<div class="a" style="left:970px;top:170px;width:7px;height:4px;background:#555"></div>
<div class="a" style="left:855px;top:174.5px;width:122px;height:481.5px;background:#fff"></div>
<div class="a" style="left:855px;top:174.5px;width:1px;height:481.5px;background:#9a9a9a"></div>
<div class="a" style="left:856px;top:174.5px;width:121px;height:0.8px;background:#d0d0d0"></div>
<div class="a" style="left:856px;top:184.5px;width:121px;height:1px;background:#e6e6e6"></div>
<div class="a t" style="left:932px;top:190.5px;font-size:7.5px;color:#222"><span style="display: inline-block; transform: scaleX(0.8448); transform-origin: left center;">+ 直播介绍</span></div>
<div class="a" style="left:856px;top:202.5px;width:93px;height:1.6px;background:#222"></div>
<div class="a t" style="left:891.5px;top:209.5px;font-size:8px;color:#111;font-weight:bold"><span style="display: inline-block; transform: scaleX(0.9375); transform-origin: left center;">讨论区</span></div>
<div class="a t" style="left:866px;top:225px;font-size:7.5px;color:#222"><span style="display: inline-block; transform: scaleX(0.75); transform-origin: left center;">早的</span></div>
<svg class="a" style="left:865px;top:241.0px" width="10" height="10" fill="none" stroke="#aaa" stroke-width="1.1"><path d="M1 9 Q0.8 1 5 1 Q9.2 1 9 9"></path><circle cx="5" cy="5" r="2" stroke="#bbb"></circle><path d="M2.2 9 Q5 6.5 7.8 9" stroke="#bbb"></path></svg>
<div class="a t" style="left:877.5px;top:242.4px;font-size:7px;color:#8a8a8a">陈思逾</div>
<div class="a t" style="left:866px;top:255.0px;font-size:7.5px;color:#000;z-index:3;-webkit-text-stroke:0.08px #000"><span style="display: inline-block; transform: scaleX(0.7917); transform-origin: left center;">眼睛跟着水瓶</span></div>
<svg class="a" style="left:865px;top:270.4px" width="10" height="10"><circle cx="5" cy="5" r="4.6" fill="#1ec36a"></circle><ellipse cx="4.3" cy="4.6" rx="2.4" ry="1.9" fill="#fff"></ellipse><ellipse cx="6.2" cy="5.8" rx="2" ry="1.6" fill="#fff" stroke="#1ec36a" stroke-width="0.5"></ellipse></svg>
<div class="a t" style="left:877.5px;top:271.8px;font-size:7px;color:#8a8a8a">苏悦辰子</div>
<div class="a t" style="left:866px;top:284.4px;font-size:7.5px;color:#000;z-index:3;-webkit-text-stroke:0.08px #000"><span style="display: inline-block; transform: scaleX(0.7813); transform-origin: left center;">买鞋去了</span></div>
<svg class="a" style="left:865px;top:299.9px" width="10" height="10"><circle cx="5" cy="5" r="4.6" fill="#1ec36a"></circle><ellipse cx="4.3" cy="4.6" rx="2.4" ry="1.9" fill="#fff"></ellipse><ellipse cx="6.2" cy="5.8" rx="2" ry="1.6" fill="#fff" stroke="#1ec36a" stroke-width="0.5"></ellipse></svg>
<div class="a t" style="left:877.5px;top:301.3px;font-size:7px;color:#8a8a8a">积北</div>
<div class="a t" style="left:866px;top:313.9px;font-size:7.5px;color:#000;z-index:3;-webkit-text-stroke:0.08px #000"><span style="display: inline-block; transform: scaleX(0.7813); transform-origin: left center;">感同身受</span></div>
<svg class="a" style="left:865px;top:329.4px" width="10" height="10"><circle cx="5" cy="5" r="4.6" fill="#1ec36a"></circle><ellipse cx="4.3" cy="4.6" rx="2.4" ry="1.9" fill="#fff"></ellipse><ellipse cx="6.2" cy="5.8" rx="2" ry="1.6" fill="#fff" stroke="#1ec36a" stroke-width="0.5"></ellipse></svg>
<div class="a t" style="left:877.5px;top:330.8px;font-size:7px;color:#8a8a8a">海派</div>
<div class="a t" style="left:866px;top:343.4px;font-size:7.5px;color:#000;z-index:3;-webkit-text-stroke:0.08px #000"><span style="display: inline-block; transform: scaleX(0.7813); transform-origin: left center;">尤其是买鞋的时候</span></div>
<svg class="a" style="left:865px;top:358.8px" width="10" height="10"><circle cx="5" cy="5" r="4.6" fill="#1ec36a"></circle><ellipse cx="4.3" cy="4.6" rx="2.4" ry="1.9" fill="#fff"></ellipse><ellipse cx="6.2" cy="5.8" rx="2" ry="1.6" fill="#fff" stroke="#1ec36a" stroke-width="0.5"></ellipse></svg>
<div class="a t" style="left:877.5px;top:360.2px;font-size:7px;color:#8a8a8a">TT</div>
<div class="a t" style="left:866px;top:372.8px;font-size:7.5px;color:#000;z-index:3;-webkit-text-stroke:0.08px #000"><span style="display: inline-block; transform: scaleX(0.7722); transform-origin: left center;">学的最好的去做鞋了</span></div>
<svg class="a" style="left:865px;top:388.2px" width="10" height="10"><circle cx="5" cy="5" r="4.6" fill="#1ec36a"></circle><ellipse cx="4.3" cy="4.6" rx="2.4" ry="1.9" fill="#fff"></ellipse><ellipse cx="6.2" cy="5.8" rx="2" ry="1.6" fill="#fff" stroke="#1ec36a" stroke-width="0.5"></ellipse></svg>
<div class="a t" style="left:877.5px;top:389.6px;font-size:7px;color:#8a8a8a">竹笋</div>
<div class="a t" style="left:866px;top:402.2px;font-size:7.5px;color:#000;z-index:3;-webkit-text-stroke:0.08px #000"><span style="display: inline-block; transform: scaleX(0.785); transform-origin: left center;">幕司达中嘛</span></div>
<svg class="a" style="left:865px;top:417.7px" width="10" height="10"><circle cx="5" cy="5" r="4.6" fill="#1ec36a"></circle><ellipse cx="4.3" cy="4.6" rx="2.4" ry="1.9" fill="#fff"></ellipse><ellipse cx="6.2" cy="5.8" rx="2" ry="1.6" fill="#fff" stroke="#1ec36a" stroke-width="0.5"></ellipse></svg>
<div class="a t" style="left:877.5px;top:419.1px;font-size:7px;color:#8a8a8a">^步、</div>
<div class="a t" style="left:866px;top:431.7px;font-size:7.5px;color:#000;z-index:3;-webkit-text-stroke:0.08px #000"><span style="display: inline-block; transform: scaleX(0.8681); transform-origin: left center;">拿到买的鞋去打羽毛球，打完半个月就坏</span></div>
<svg class="a" style="left:865px;top:447.1px" width="10" height="10"><circle cx="5" cy="5" r="4.6" fill="#1ec36a"></circle><ellipse cx="4.3" cy="4.6" rx="2.4" ry="1.9" fill="#fff"></ellipse><ellipse cx="6.2" cy="5.8" rx="2" ry="1.6" fill="#fff" stroke="#1ec36a" stroke-width="0.5"></ellipse></svg>
<div class="a t" style="left:877.5px;top:448.5px;font-size:7px;color:#8a8a8a">暮悦辰子</div>
<div class="a t" style="left:866px;top:461.1px;font-size:7.5px;color:#000;z-index:3;-webkit-text-stroke:0.08px #000"><span style="display: inline-block; transform: scaleX(0.7813); transform-origin: left center;">南丁格尔</span></div>
<svg class="a" style="left:865px;top:476.6px" width="10" height="10"><circle cx="5" cy="5" r="4.6" fill="#1ec36a"></circle><ellipse cx="4.3" cy="4.6" rx="2.4" ry="1.9" fill="#fff"></ellipse><ellipse cx="6.2" cy="5.8" rx="2" ry="1.6" fill="#fff" stroke="#1ec36a" stroke-width="0.5"></ellipse></svg>
<div class="a t" style="left:877.5px;top:478.0px;font-size:7px;color:#8a8a8a">璟栖（法九）</div>
<div class="a t" style="left:866px;top:490.6px;font-size:7.5px;color:#000;z-index:3;-webkit-text-stroke:0.08px #000"><span style="display: inline-block; transform: scaleX(0.785); transform-origin: left center;">有没好好说</span></div>
<svg class="a" style="left:865px;top:506.1px" width="10" height="10"><circle cx="5" cy="5" r="4.6" fill="#1ec36a"></circle><ellipse cx="4.3" cy="4.6" rx="2.4" ry="1.9" fill="#fff"></ellipse><ellipse cx="6.2" cy="5.8" rx="2" ry="1.6" fill="#fff" stroke="#1ec36a" stroke-width="0.5"></ellipse></svg>
<div class="a t" style="left:877.5px;top:507.4px;font-size:7px;color:#8a8a8a">七在</div>
<div class="a t" style="left:866px;top:520.0px;font-size:7.5px;color:#000;z-index:3;-webkit-text-stroke:0.08px #000"><span style="display: inline-block; transform: scaleX(0.8556); transform-origin: left center;">图源社鞋真是,以产量绝，一直就打回原形</span></div>
<svg class="a" style="left:865px;top:535.5px" width="10" height="10"><circle cx="5" cy="5" r="4.6" fill="#1ec36a"></circle><ellipse cx="4.3" cy="4.6" rx="2.4" ry="1.9" fill="#fff"></ellipse><ellipse cx="6.2" cy="5.8" rx="2" ry="1.6" fill="#fff" stroke="#1ec36a" stroke-width="0.5"></ellipse></svg>
<div class="a t" style="left:877.5px;top:536.9px;font-size:7px;color:#8a8a8a">暮悦辰子</div>
<div class="a t" style="left:866px;top:549.5px;font-size:7.5px;color:#000;z-index:3;-webkit-text-stroke:0.08px #000"><span style="display: inline-block; transform: scaleX(0.785); transform-origin: left center;">暮雨说得对</span></div>
<div class="a" style="left:856px;top:564px;width:121px;height:1px;background:#ececec"></div>
<svg class="a" style="left:862px;top:566px" width="50" height="15" fill="none" stroke="#555" stroke-width="0.9">
 <circle cx="8" cy="7.5" r="3.8"></circle><path d="M6.3 6.3 H6.6 M9.4 6.3 H9.7 M6.2 8.8 Q8 10 9.8 8.8" stroke-width="0.8"></path>
 <circle cx="20.8" cy="9.5" r="1.5"></circle><circle cx="26" cy="9.5" r="1.5"></circle><path d="M21.8 8.3 L25.8 4 M25 8.3 L21 4"></path>
 <rect x="34.5" y="3.7" width="7" height="8" stroke-width="1"></rect><path d="M35.5 10 L38 7.5 L40.5 10" stroke-width="0.8"></path>
</svg>
<svg class="a" style="left:860px;top:640px" width="80" height="16" fill="none" stroke="#444" stroke-width="1">
 <rect x="5.5" y="3" width="3.5" height="6.5" rx="1.7" fill="#555" stroke="none"></rect><path d="M4.5 7.5 Q4.5 11 7.2 11 Q10 11 10 7.5 M7.2 11 V13" stroke-width="0.9"></path>
 <path d="M19 6.5 H21 L25.5 3.5 V13.5 L21 10.5 H19 Z M27 6.5 V10.5" stroke-width="0.9"></path>
 <path d="M37 12 V4.5 L42.5 3.5 V11" stroke-width="1"></path><circle cx="36" cy="12" r="1.2" fill="#444" stroke="none"></circle><circle cx="41.5" cy="11" r="1.2" fill="#444" stroke="none"></circle>
 <circle cx="57" cy="8" r="3.6" stroke-width="0.9"></circle><circle cx="57" cy="8" r="1" fill="#444" stroke="none"></circle><path d="M54.5 13.5 H59.5" stroke-width="0.9"></path>
</svg>
<svg class="a" style="left:926px;top:645px" width="26" height="11"><path d="M0 11 V6 L1 5 L2 7 L3 4.5 L4 6 L5 5.5 L6 7 L7 4.5 L8 6 L9 5 L10 6.5 L11 4 L12 6 L13 5 L14 6.5 L15 4.5 L16 6 L17 5 L18 6 L19 4 L20 6 L21 5.5 L22 6.5 L23 4.5 L24 6 L25 5 L26 6 V11 Z" fill="#e0b020"></path></svg>

<!-- floating side panel -->
<div class="a" style="left:936px;top:306px;width:50px;height:162px;border-radius:10px;background:#4b4b4b;z-index:2"></div>
<svg class="a" style="left:936px;top:306px;z-index:2" width="41" height="162" fill="none">
 <defs><linearGradient id="aig" gradientUnits="userSpaceOnUse" x1="15" y1="16" x2="34" y2="32"><stop offset="0" stop-color="#70e4ff"></stop><stop offset="0.5" stop-color="#7a90f8"></stop><stop offset="1" stop-color="#8a48f0"></stop></linearGradient></defs>
 <path d="M21.8 31 H17.5 Q15 31 15 28.5 V18.5 Q15 16 17.5 16 H27.5 Q29 16 30 17 Q33 17.5 33 20.5 V22.5" stroke="url(#aig)" stroke-width="1.9" stroke-linecap="round" stroke-linejoin="round"></path>
 <circle cx="20" cy="21" r="1.5" fill="#6ee0ff"></circle>
 <path d="M24.5 31.5 L27.8 25.5 L31 31.5 M33.6 25.5 V31.8" stroke="url(#aig)" stroke-width="1.9" stroke-linecap="round" stroke-linejoin="round"></path>
 <rect x="16" y="66.5" width="15" height="16.5" rx="1.5" stroke="#fff" stroke-width="1.7"></rect>
 <path d="M16 80 H31" stroke="#fff" stroke-width="1.5"></path>
 <path d="M20 66.5 V79.5" stroke="#fff" stroke-width="1.5"></path>
 <path d="M33.5 70 V85 H18" stroke="#fff" stroke-width="1.7"></path>
 <path d="M3 107.8 H41" stroke="#666" stroke-width="0.8"></path>
 <path d="M26 118 L20.5 123.5 L26 129" stroke="#fff" stroke-width="2" stroke-linecap="round" stroke-linejoin="round"></path>
</svg>
<div class="a t" style="left:950px;top:344.5px;font-size:11.5px;color:#fff;z-index:2"><span style="display: inline-block; transform: scaleX(0.8743); transform-origin: left center;">AI看</span></div>
<div class="a t" style="left:950px;top:395px;font-size:11.5px;color:#fff;z-index:2"><span style="display: inline-block; transform: scaleX(0.8542); transform-origin: left center;">课件</span></div>
<div class="a t" style="left:950px;top:445px;font-size:11.5px;color:#fff;z-index:2"><span style="display: inline-block; transform: scaleX(0.8542); transform-origin: left center;">展开</span></div>

<!-- progress -->
<div class="a" style="left:39px;top:738px;width:890px;height:2px;background:#4b4b4b"></div>
<div class="a" style="left:39px;top:738px;width:540px;height:2px;background:#0ea2f0"></div>
<div class="a t" style="left:0px;top:735.5px;font-size:10px;color:#fff"><span style="display: inline-block; transform: scaleX(0.9888); transform-origin: left center;">00:00:02</span></div>
<div class="a t" style="left:938.5px;top:735.5px;font-size:10px;color:#fff"><span style="display: inline-block; transform: scaleX(0.9888); transform-origin: left center;">01:33:05</span></div>
<svg class="a" style="left:0;top:750px" width="977" height="45" fill="#fff" stroke="#fff" stroke-linejoin="round" stroke-linecap="round">
 <path d="M16.5 14.5 L31 24 L16.5 33.5 Z" stroke-width="4"></path>
 <rect x="70.5" y="16.5" width="2.8" height="14.5" stroke="none" rx="0.8"></rect>
 <path d="M85 17.5 L77 23.8 L85 30 Z" stroke-width="2.6"></path>
 <rect x="126.8" y="16.5" width="2.8" height="14.5" stroke="none" rx="0.8"></rect>
 <path d="M116 17.5 L124 23.8 L116 30 Z" stroke-width="2.6"></path>
 <g fill="none" stroke-width="1.9">
  <path d="M805 15.5 H817 M805 22.3 H817 M805 29 H817"></path>
  <circle cx="800.5" cy="15.5" r="0.6" fill="#fff"></circle><circle cx="800.5" cy="22.3" r="0.6" fill="#fff"></circle><circle cx="800.5" cy="29" r="0.6" fill="#fff"></circle>
  <path d="M851.5 14.3 L860.5 14.3 L865 22.3 L860.5 30.3 L851.5 30.3 L847 22.3 Z"></path>
  <circle cx="856" cy="22.3" r="3.2"></circle>
  <path d="M894 18.5 H898 L904 14 V30.5 L898 26 H894 Z"></path>
  <path d="M908 19 Q910 22.3 908 25.6 M911 16 Q915 22.3 911 28.6"></path>
  <path d="M939 19 V14.5 H943.5 M951.5 14.5 H956 V19 M956 26 V30.5 H951.5 M943.5 30.5 H939 V26"></path>
 </g>
</svg>
<div class="a t" style="left:591px;top:765.5px;font-size:14px;color:#fff"><span style="display: inline-block; transform: scaleX(1); transform-origin: left center;">倍速</span></div>
<div class="a t" style="left:641.5px;top:765.5px;font-size:14px;color:#f3d59a"><span style="display: inline-block; transform: scaleX(1.0179); transform-origin: left center;">超清</span></div>
<div class="a t" style="left:692px;top:765.5px;font-size:14px;color:#fff"><span style="display: inline-block; transform: scaleX(1); transform-origin: left center;">字幕</span></div>
<div class="a t" style="left:743.8px;top:765.5px;font-size:14px;color:#fff"><span style="display: inline-block; transform: scaleX(1); transform-origin: left center;">查找</span></div>
<div class="a" style="left:656.3px;top:753.6px;width:30.5px;height:13px;border-radius:6.5px;background:#4d3a33"></div>
<div class="a" style="left:758.4px;top:753.2px;width:30.5px;height:13px;border-radius:6.5px;background:#4d3a33"></div>
<div class="a t" style="left:661px;top:756px;font-size:8.5px;font-weight:bold;color:#f0d8c8"><span style="display: inline-block; transform: scaleX(1.0839); transform-origin: left center;">SWP</span></div>
<div class="a t" style="left:763px;top:755.6px;font-size:8.5px;font-weight:bold;color:#f0d8c8"><span style="display: inline-block; transform: scaleX(1.0839); transform-origin: left center;">SWP</span></div>

</body></html>
